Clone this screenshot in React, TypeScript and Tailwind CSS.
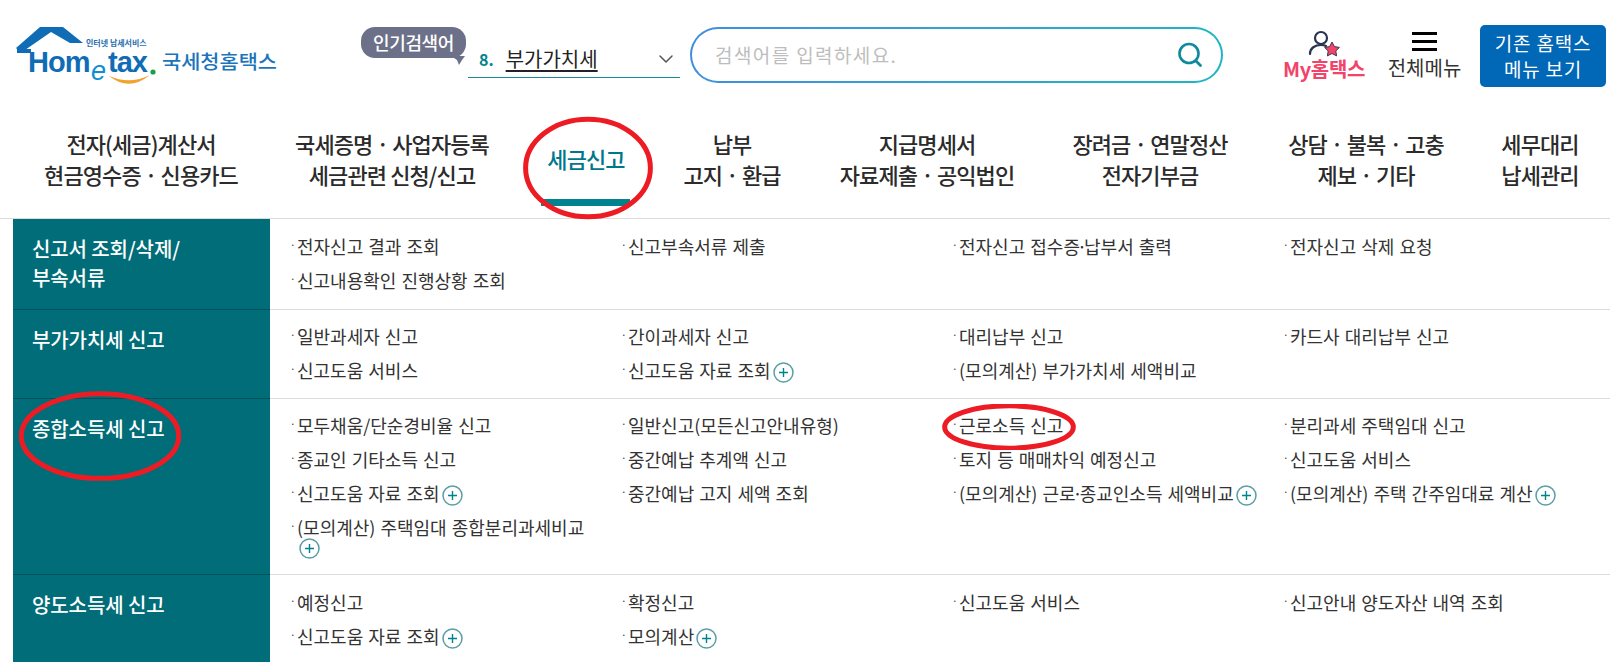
import { ChevronDown } from 'lucide-react'

const font = { fontFamily: '"Noto Sans CJK KR", "Noto Sans", sans-serif' }
const latin = { fontFamily: '"Liberation Sans", sans-serif' }

const navItems = [
  { lines: ['전자(세금)계산서', '현금영수증 · 신용카드'], width: 'w-[282px]' },
  { lines: ['국세증명 · 사업자등록', '세금관련 신청/신고'], width: 'w-[220px]' },
  { lines: ['세금신고'], width: 'w-[168px]', active: true },
  { lines: ['납부', '고지 · 환급'], width: 'w-[124px]' },
  { lines: ['지급명세서', '자료제출 · 공익법인'], width: 'w-[266px]' },
  { lines: ['장려금 · 연말정산', '전자기부금'], width: 'w-[180px]' },
  { lines: ['상담 · 불복 · 고충', '제보 · 기타'], width: 'w-[252px]' },
  { lines: ['세무대리', '납세관리'], width: 'w-[96px]' },
]

type Link = { text: string; plus?: boolean; wrapPlus?: boolean }

const sections: { title: string[]; height: string; pad: string; links: Link[] }[] = [
  {
    title: ['신고서 조회/삭제/', '부속서류'],
    height: 'h-[91px]',
    pad: 'pt-[11px]',
    links: [
      { text: '전자신고 결과 조회' },
      { text: '신고부속서류 제출' },
      { text: '전자신고 접수증·납부서 출력' },
      { text: '전자신고 삭제 요청' },
      { text: '신고내용확인 진행상황 조회' },
    ],
  },
  {
    title: ['부가가치세 신고'],
    height: 'h-[89px]',
    pad: 'pt-[10px]',
    links: [
      { text: '일반과세자 신고' },
      { text: '간이과세자 신고' },
      { text: '대리납부 신고' },
      { text: '카드사 대리납부 신고' },
      { text: '신고도움 서비스' },
      { text: '신고도움 자료 조회', plus: true },
      { text: '(모의계산) 부가가치세 세액비교' },
    ],
  },
  {
    title: ['종합소득세 신고'],
    height: 'h-[176px]',
    pad: 'pt-[10px]',
    links: [
      { text: '모두채움/단순경비율 신고' },
      { text: '일반신고(모든신고안내유형)' },
      { text: '근로소득 신고' },
      { text: '분리과세 주택임대 신고' },
      { text: '종교인 기타소득 신고' },
      { text: '중간예납 추계액 신고' },
      { text: '토지 등 매매차익 예정신고' },
      { text: '신고도움 서비스' },
      { text: '신고도움 자료 조회', plus: true },
      { text: '중간예납 고지 세액 조회' },
      { text: '(모의계산) 근로·종교인소득 세액비교', plus: true },
      { text: '(모의계산) 주택 간주임대료 계산', plus: true },
      { text: '(모의계산) 주택임대 종합분리과세비교', wrapPlus: true },
    ],
  },
  {
    title: ['양도소득세 신고'],
    height: 'h-[88px]',
    pad: 'pt-[11px]',
    links: [
      { text: '예정신고' },
      { text: '확정신고' },
      { text: '신고도움 서비스' },
      { text: '신고안내 양도자산 내역 조회' },
      { text: '신고도움 자료 조회', plus: true },
      { text: '모의계산', plus: true },
    ],
  },
]

function PlusIcon() {
  return (
    <svg width="21" height="21" viewBox="0 0 21 21" className="shrink-0">
      <circle cx="10.5" cy="10.5" r="9.5" fill="#fff" stroke="#5b9ea6" strokeWidth="1.5" />
      <path d="M10.500 6v9M6 10.500h9" stroke="#00838f" strokeWidth="1.4" />
    </svg>
  )
}

function Logo() {
  return (
    <svg width="270" height="64" viewBox="0 0 270 64" className="shrink-0">
      {/* roof and wall */}
      <path d="M25 1h23l20 16H55L36 6 10 24H3L1 22z" fill="#0f6cb5" />
      <path d="M2 23h14v4H2z" fill="#0f6cb5" />
      <text x="71" y="20" fontSize="8" fontWeight="700" fill="#2a6fb0" style={font}>
        인터넷 납세서비스
      </text>
      <text x="13" y="46" fontSize="29" fontWeight="700" fill="#0f6cb5" letterSpacing="-1" style={latin}>
        Hom
      </text>
      <text x="76" y="54" fontSize="27" fontStyle="italic" fill="#0f8fd0" style={latin}>
        e
      </text>
      <text x="93" y="46" fontSize="29" fontWeight="700" fill="#0f6cb5" letterSpacing="-1" style={latin}>
        tax
      </text>
      <circle cx="138" cy="46" r="2.6" fill="#1e9e4a" />
      <path d="M94 50q20 16 41-1q-20 10-41 1z" fill="#f2a22e" />
      <text x="147" y="43" fontSize="19" fontWeight="500" fill="#1b75bb" textLength="115" lengthAdjust="spacingAndGlyphs" style={font}>
        국세청홈택스
      </text>
    </svg>
  )
}

function Bubble() {
  return (
    <div className="relative w-[105px] h-[31px] mt-[1px] rounded-[14px] bg-[#6c7089] flex items-center justify-center shrink-0">
      <span className="text-[18px] font-medium tracking-[-0.4px] text-white">인기검색어</span>
      <svg width="14" height="9" viewBox="0 0 14 9" className="absolute right-[1px] top-[29px]">
        <path d="M0 0h14l-3 4-3 5-2-5z" fill="#6c7089" />
      </svg>
    </div>
  )
}

function Header() {
  return (
    <div className="h-[105px] flex items-start pt-[26px] pl-[15px]">
      <Logo />
      <div className="ml-[76px] flex items-start">
        <Bubble />
        <div className="ml-[2px] mt-[15px] w-[212px] h-[37px] border-b border-[#1b8a9a] flex items-center pl-[11px] pr-[2px]">
          <span className="text-[16px] font-bold text-[#00838f]">8.</span>
          <span className="ml-[12px] text-[20px] leading-[26px] text-[#222] underline underline-offset-[3px] decoration-[#222]">부가가치세</span>
          <ChevronDown className="ml-auto text-[#555]" size={24} strokeWidth={1.5} />
        </div>
      </div>
      <div className="ml-[10px] mt-[1px] w-[533px] h-[56px] rounded-[28px] p-[2px] bg-gradient-to-r from-[#3f8fdc] to-[#1fb5c4]">
        <div className="h-full rounded-[26px] bg-white flex items-center pl-[23px] pr-[17px]">
          <span className="text-[19px] tracking-[1.4px] text-[#bdbdbd]">검색어를 입력하세요.</span>
          <svg width="28" height="28" viewBox="0 0 28 28" fill="none" className="ml-auto">
            <circle cx="13" cy="12.5" r="9.5" stroke="#0f8a9c" strokeWidth="2.6" />
            <path d="M20 20l4.500 4.500" stroke="#0f8a9c" strokeWidth="2.8" strokeLinecap="round" />
          </svg>
        </div>
      </div>
      <div className="ml-[59px] w-[84px] flex flex-col items-center">
        <svg width="34" height="28" viewBox="0 0 34 28" fill="none" className="mt-[3px]">
          <circle cx="14" cy="9" r="6" stroke="#2a3350" strokeWidth="2.2" />
          <path d="M3 25c0-6 5-9 11-9 2 0 4 .4 5 1" stroke="#2a3350" strokeWidth="2.2" strokeLinecap="round" />
          <path d="M25 13l2.400 4.600 5 .8-3.600 3.500.8 5-4.600-2.400-4.600 2.400.8-5-3.600-3.500 5-.8z" fill="#f2436a" stroke="#3a3a4a" strokeWidth="1" />
        </svg>
        <span className="mt-[-3px] text-[20px] font-bold text-[#f2436a] tracking-[-0.3px] whitespace-nowrap">My홈택스</span>
      </div>
      <div className="ml-[22px] w-[73px] flex flex-col items-center">
        <div className="mt-[6px] w-[25px] h-[19px] flex flex-col justify-between">
          <div className="h-[3px] bg-black" />
          <div className="h-[3px] bg-black" />
          <div className="h-[3px] bg-black" />
        </div>
        <span className="mt-[2px] text-[20px] text-[#333] whitespace-nowrap">전체메뉴</span>
      </div>
      <div className="ml-[19px] mt-[-1px] w-[126px] h-[62px] rounded-[5px] bg-[#0068b7] flex flex-col items-center justify-center text-[19px] leading-[26px] tracking-[0.8px] text-white">
        <span>기존 홈택스</span>
        <span>메뉴 보기</span>
      </div>
    </div>
  )
}

function Nav() {
  return (
    <div className="h-[114px] flex border-b border-[#dcdcdc] tracking-[-0.9px] text-[22px] leading-[31px] font-medium text-[#2b2b2b]">
      {navItems.map((item) => (
        <div key={item.lines[0]} className={`${item.width} shrink-0 h-full relative flex flex-col items-center justify-start pt-[23px]`}>
          {item.active ? (
            <>
              <span className="mt-[15px] text-[#00778a]">{item.lines[0]}</span>
              <div className="absolute left-[39px] top-[94px] w-[89px] h-[7px] bg-[#00838f]" />
            </>
          ) : (
            item.lines.map((line) => <span key={line} className="whitespace-nowrap">{line}</span>)
          )}
        </div>
      ))}
    </div>
  )
}

// the middle dot inside a label is much narrower in the original font
function LinkText({ text }: { text: string }) {
  const parts = text.split('·')
  if (parts.length === 1) return <span>{text}</span>
  return (
    <span>
      {parts[0]}
      <span className="-mx-[3px]">·</span>
      {parts[1]}
    </span>
  )
}

function Section({ section, last }: { section: (typeof sections)[number]; last: boolean }) {
  return (
    <div className={`${section.height} flex ${last ? '' : 'border-b border-[#dcdcdc]'}`}>
      <div className={`w-[257px] shrink-0 bg-[#006d78] pl-[19px] pt-[15px] text-[20px] leading-[29px] font-medium tracking-[-0.1px] text-white ${last ? '' : '-mb-px border-b border-[#00535c]'}`}>
        {section.title.map((line) => <div key={line}>{line}</div>)}
      </div>
      <div className={`flex-1 grid grid-cols-[331px_331px_331px_1fr] content-start pl-[20px] ${section.pad}`}>
        {section.links.map((link, i) => (
          <div key={link.text + i} className="min-h-[34px] text-[18px] leading-[33px] [word-spacing:1px] text-[#333]">
            <div className="flex items-start whitespace-nowrap">
              <span className="w-[7px] text-[10px] shrink-0 leading-[30px]">·</span>
              <LinkText text={link.text} />
              {link.plus && <span className="ml-[2px] mt-[8px]"><PlusIcon /></span>}
            </div>
            {link.wrapPlus && <div className="pl-[9px] h-[24px] -mt-[6px]"><PlusIcon /></div>}
          </div>
        ))}
      </div>
    </div>
  )
}

function Ellipse({ className, width }: { className: string; width: number }) {
  return (
    <svg viewBox="0 0 100 100" preserveAspectRatio="none" className={`absolute ${className}`} fill="none">
      <ellipse cx="50" cy="50" rx="48" ry="46" stroke="#ed1c24" strokeWidth={width} vectorEffect="non-scaling-stroke" />
    </svg>
  )
}

export default function App() {
  return (
    <div className="relative w-[1610px] h-[662px] overflow-hidden bg-white" style={font}>
      <Header />
      <Nav />
      <div className="ml-[13px]">
        {sections.map((section, i) => (
          <Section key={section.title[0]} section={section} last={i === sections.length - 1} />
        ))}
      </div>
      {/* red marker circles drawn over the page */}
      <Ellipse width={5} className="left-[523px] top-[115px] w-[130px] h-[106px]" />
      <Ellipse width={5} className="left-[18px] top-[390px] w-[164px] h-[92px]" />
      <Ellipse width={5} className="left-[942px] top-[404px] w-[134px] h-[46px]" />
    </div>
  )
}
